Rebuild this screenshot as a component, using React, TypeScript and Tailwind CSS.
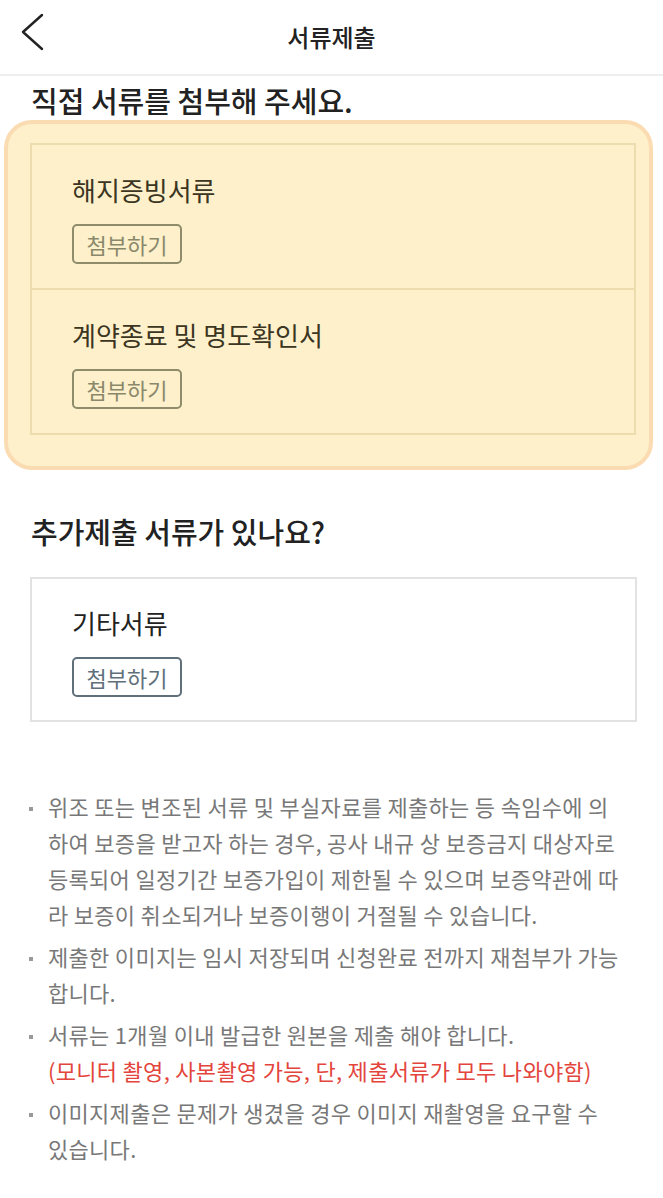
const font = { fontFamily: '"Noto Sans CJK KR", "Noto Sans", sans-serif' };

interface DocRowProps {
    title: string;
    divider?: boolean;
}

function DocRow({ title, divider }: DocRowProps) {
    return (
        <div className={`pl-[40px] pt-[29px] pb-[24px] ${divider ? "border-t-2 border-[#ecdcae]" : ""}`}>
            <p className="text-[26px] leading-[32px] text-[#3b3522]">{title}</p>
            <button className="mt-[18px] h-[40px] w-[110px] rounded-[5px] border-2 border-[#8f8c6c] bg-transparent text-[22px] leading-none text-[#8a886a]">
                첨부하기
            </button>
        </div>
    );
}

const notes: { lines: string[]; red?: string }[] = [
    {
        lines: [
            "위조 또는 변조된 서류 및 부실자료를 제출하는 등 속임수에 의",
            "하여 보증을 받고자 하는 경우, 공사 내규 상 보증금지 대상자로",
            "등록되어 일정기간 보증가입이 제한될 수 있으며 보증약관에 따",
            "라 보증이 취소되거나 보증이행이 거절될 수 있습니다.",
        ],
    },
    { lines: ["제출한 이미지는 임시 저장되며 신청완료 전까지 재첨부가 가능", "합니다."] },
    { lines: ["서류는 1개월 이내 발급한 원본을 제출 해야 합니다."], red: "(모니터 촬영, 사본촬영 가능, 단, 제출서류가 모두 나와야함)" },
    { lines: ["이미지제출은 문제가 생겼을 경우 이미지 재촬영을 요구할 수", "있습니다."] },
];

export default function App() {
    return (
        <div className="w-[663px] min-h-[1198px] bg-white" style={font}>
            {/* header */}
            <div className="relative h-[76px] flex items-center justify-center border-b-2 border-[#eeeeee]">
                <svg className="absolute left-[18px] top-[13px]" width="30" height="38" viewBox="0 0 30 38" fill="none">
                    <polyline points="24,2 5,19 24,36" stroke="#222" strokeWidth="2.4" strokeLinecap="round" strokeLinejoin="round" />
                </svg>
                <h1 className="text-[24px] font-medium text-[#222]">서류제출</h1>
            </div>

            <h2 className="mt-[7px] ml-[31px] text-[29px] leading-[34px] font-medium text-[#222]">직접 서류를 첨부해 주세요.</h2>

            <div className="mt-[3px] ml-[4px] w-[649px] rounded-[28px] border-4 border-[#fbdcb2] bg-[#fdf0ca] pt-[19px] pb-[31px] pl-[22px] pr-[13px]">
                <div className="border-2 border-[#ecdcae]">
                    <DocRow title="해지증빙서류" />
                    <DocRow title="계약종료 및 명도확인서" divider />
                </div>
            </div>

            <h2 className="mt-[44px] ml-[31px] text-[29px] leading-[34px] font-medium text-[#222]">추가제출 서류가 있나요?</h2>

            <div className="mt-[29px] ml-[30px] w-[607px] border-2 border-[#e2e2e2]">
                <div className="pl-[40px] pt-[28px] pb-[23px]">
                    <p className="text-[26px] leading-[32px] text-[#222]">기타서류</p>
                    <button className="mt-[18px] h-[40px] w-[110px] rounded-[5px] border-2 border-[#5f707b] bg-white text-[22px] leading-none text-[#5f707b]">
                        첨부하기
                    </button>
                </div>
            </div>

            <ul className="mt-[66px] pl-[29px] pr-[10px] flex flex-col gap-[6px] pb-[40px]">
                {notes.map((n, i) => (
                    <li key={i} className="flex text-[22px] leading-[36px] text-[#787878]">
                        <span className="w-[19px] shrink-0 flex pt-[19px]">
                            <span className="block h-[4px] w-[4px] bg-[#999]" />
                        </span>
                        <div className="whitespace-nowrap tracking-[0.3px]">
                            {n.lines.map((l, j) => (
                                <div key={j}>{l}</div>
                            ))}
                            {n.red && <div className="text-[#e3453c]">{n.red}</div>}
                        </div>
                    </li>
                ))}
            </ul>
        </div>
    );
}
